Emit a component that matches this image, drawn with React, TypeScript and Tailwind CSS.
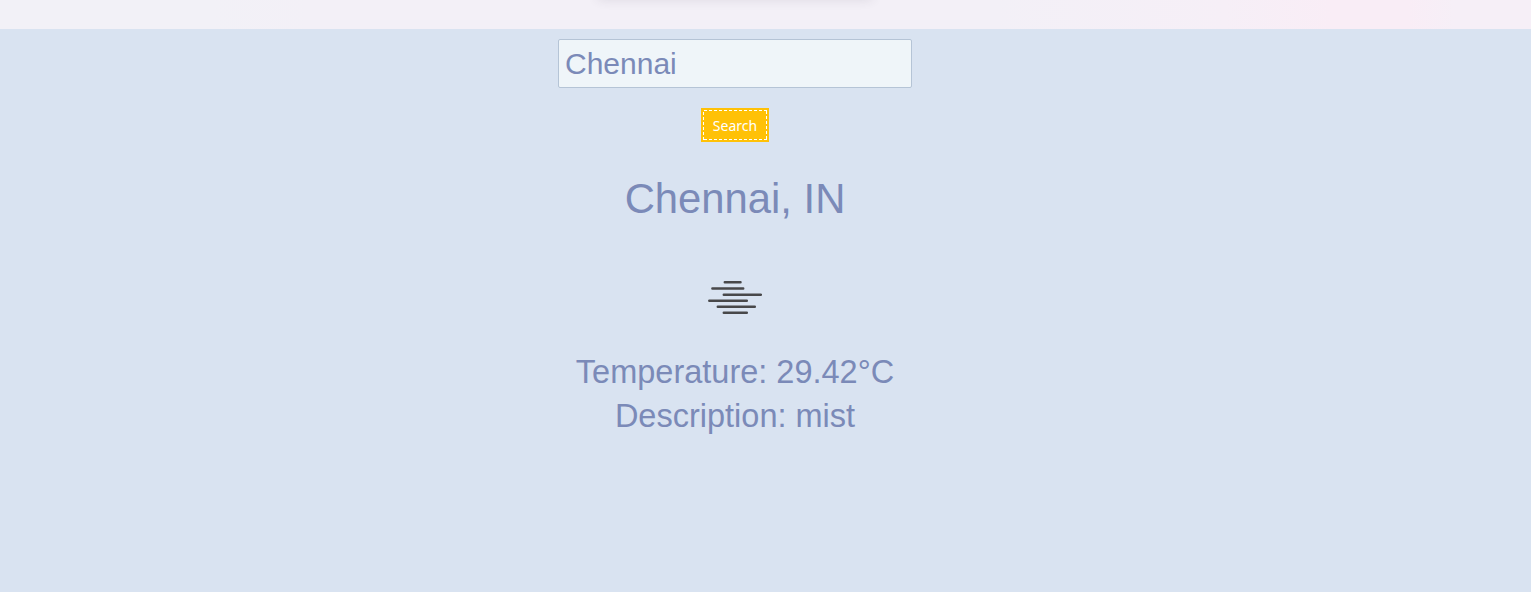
export default function App() {
  return (
    <div className="flex h-[592px] w-full flex-col overflow-hidden bg-[#d9e3f1] font-['Liberation_Sans',Arial,sans-serif] text-[#7b8ab8]">
      <div className="flex h-[29px] shrink-0 justify-center overflow-hidden bg-[linear-gradient(90deg,#f2f1f7_0%,#f2f1f7_14%,#f3f0f7_20%,#f3f0f7_65%,#f6eff7_80%,#f9edf6_87%,#f9edf6_92%,#f6eff7_95%,#f6eff7_100%)] pr-[61px]">
        <div className="-mt-[10px] h-[9px] w-[276px] rounded-lg shadow-[0_0_12px_rgba(60,50,70,0.14)]" />
      </div>
      <main className="flex w-[1470px] flex-col items-center pt-[10px]">
        <input
          className="h-[49px] w-[354px] rounded-[2px] border border-[#b5c4d6] bg-[#eff5f9] px-[6px] text-[30px] outline-none"
          defaultValue="Chennai"
        />
        <button className="relative mt-5 h-[34px] w-[68px] bg-[#ffc107] font-['Noto_Sans',sans-serif] text-[14px] text-white">
          <svg className="absolute inset-[2px] h-[30px] w-[64px]" viewBox="0 0 64 30" fill="none" stroke="white" strokeDasharray="3 2">
            <path d="M1 .5H64M1 29.5H64M.5 2V30M63.5 1V30" />
          </svg>
          Search
        </button>
        <h1 className="mt-[33px] text-[41.8px] leading-[48px]">Chennai, IN</h1>
        <svg className="mt-[58px] h-[34px] w-[54px]" viewBox="0 0 54 34" stroke="#48484a" strokeWidth="2.5" strokeLinecap="round">
          <path d="M16.8 1.3H32.5M4.4 7.5H35.2M15.8 13.8H52.8M1.3 19.8H38.8M9.8 25.8H46.8M15.8 31.8H38.8" />
        </svg>
        <p className="mt-[35px] text-[32.5px] leading-[44px]">Temperature: 29.42°C</p>
        <p className="text-[32.5px] leading-[44px]">Description: mist</p>
      </main>
    </div>
  );
}
